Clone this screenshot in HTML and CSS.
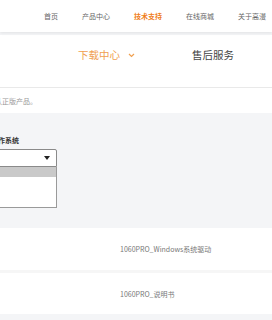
FILE: index.html
```html
<!DOCTYPE html>
<html lang="zh">
<head>
  <meta charset="UTF-8" />
  <title>下载中心</title>
  <link rel="stylesheet" href="styles.css">
</head>
<body>
  <header class="nav">
    <a class="nav-item">首页</a>
    <a class="nav-item">产品中心</a>
    <a class="nav-item active">技术支持</a>
    <a class="nav-item">在线商城</a>
    <a class="nav-item">关于高漫</a>
  </header>

  <nav class="subnav">
    <span class="sub-item current">下载中心
      <svg class="chevron" width="7" height="5" viewBox="0 0 7 5"><path d="M1 1 L3.5 3.5 L6 1" fill="none" stroke="#f0a050" stroke-width="1.2"/></svg>
    </span>
    <span class="sub-item">售后服务</span>
  </nav>

  <section class="notice">
    <p>认正版产品。</p>
  </section>

  <section class="filter">
    <label class="filter-label">操作系统</label>
    <div class="select">
      <div class="select-box">
        <span class="arrow"></span>
      </div>
      <ul class="options">
        <li class="selected"></li>
        <li></li>
        <li></li>
        <li></li>
      </ul>
    </div>
  </section>

  <section class="downloads">
    <div class="row">
      <span class="file">1060PRO_Windows系统驱动</span>
    </div>
    <div class="sep"></div>
    <div class="row">
      <span class="file">1060PRO_说明书</span>
    </div>
  </section>
</body>
</html>
```

FILE: styles.css
```css
body {
  margin: 0;
  padding: 0;
  font-family: "Noto Sans CJK SC", "Noto Sans", sans-serif;
  background-color: #f4f5f7;
  overflow: hidden;
}

.nav {
  height: 32px;
  display: flex;
  justify-content: flex-end;
  align-items: center;
  gap: 24px;
  padding-right: 6px;
  background-color: #fff;
  box-shadow: 0 1px 3px rgba(0,0,0,0.08);
  position: relative;
}

.nav-item {
  font-size: 7px;
  color: #666;
  line-height: 1;
}

.nav-item.active {
  color: #ef7d1a;
  font-weight: bold;
}

.subnav {
  height: 53px;
  margin-top: 3px;
  box-sizing: border-box;
  display: flex;
  align-items: flex-start;
  padding: 13px 0 0 78px;
  background-color: #fff;
  border-bottom: 1px solid #e9e9e9;
}

.sub-item {
  font-size: 10.5px;
  line-height: 14px;
  color: #444;
  display: flex;
  align-items: center;
}

.sub-item.current {
  color: #f0a050;
  width: 114px;
}

.chevron {
  margin-left: 8px;
}

.notice {
  height: 25px;
  display: flex;
  align-items: center;
  background-color: #fff;
}

.notice p {
  margin: 0 0 0 -5px;
  font-size: 7px;
  color: #999;
}

.filter {
  height: 115px;
  padding-top: 22px;
  box-sizing: border-box;
  margin-left: -9px;
}

.filter-label {
  display: block;
  font-size: 7px;
  font-weight: bold;
  color: #333;
  margin-bottom: 4px;
}

.select {
  width: 66px;
}

.select-box {
  height: 16px;
  border: 1px solid #8a8a8a;
  border-radius: 2px 2px 0 0;
  background-color: #fff;
  display: flex;
  align-items: center;
  justify-content: flex-end;
  padding-right: 6px;
}

.arrow {
  width: 0;
  height: 0;
  border-left: 3px solid transparent;
  border-right: 3px solid transparent;
  border-top: 4px solid #222;
}

.options {
  list-style: none;
  margin: 0;
  padding: 0;
  border: 1px solid #9a9a9a;
  border-top: none;
  background-color: #fff;
}

.options li {
  height: 10px;
}

.options li.selected {
  background-color: #c9c9c9;
}

.downloads {
  background-color: #fff;
}

.row {
  height: 42px;
  display: flex;
  align-items: center;
  padding-left: 120px;
}

.row + .sep + .row {
  height: 41px;
}

.file {
  font-size: 7px;
  color: #777;
}

.sep {
  height: 3px;
  background-color: #f6f6f6;
}
```
